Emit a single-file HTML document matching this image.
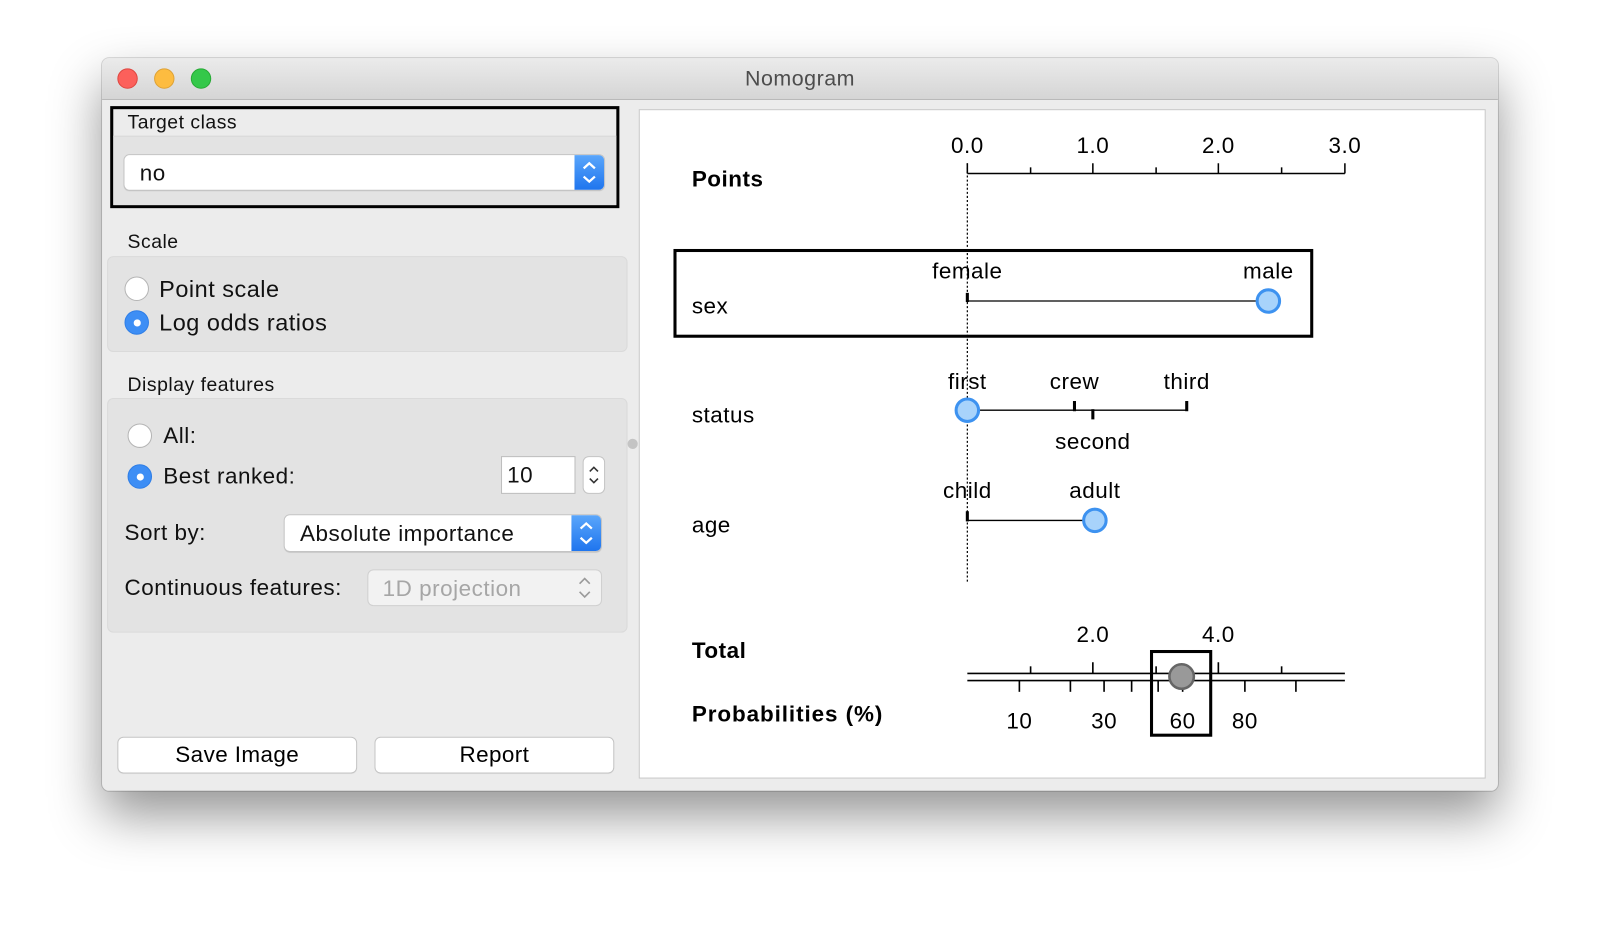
<!DOCTYPE html>
<html><head><style>
html,body{margin:0;padding:0;width:1600px;height:937px;overflow:hidden;background:#fff;font-family:"Liberation Sans",Helvetica,Arial,sans-serif;}
#s{position:absolute;left:0;top:0;width:1568px;height:918px;transform:scale(1.0204);transform-origin:0 0;}
.a{position:absolute;}
.win{left:100px;top:57px;width:1368px;height:718px;border-radius:7px;background:#ececec;box-shadow:0 24px 50px rgba(0,0,0,0.42),0 0 0 1px rgba(0,0,0,0.15);overflow:hidden;}
.tb{left:0;top:0;width:1368px;height:40px;background:linear-gradient(#ebebeb,#d5d5d5);border-bottom:1px solid #b9b9b9;}
.dot{width:20px;height:20px;border-radius:50%;top:10px;}
.t{font-size:21px;color:#111;white-space:nowrap;letter-spacing:0.5px;}
.grp{background:#e3e3e3;border:1px solid #dadada;border-radius:6px;}
.radio{width:24px;height:24px;border-radius:50%;background:#fff;border:1px solid #b5b5b5;box-sizing:border-box;}
.radio.on{background:#3d8ef5;border-color:#2f7ee6;}
.radio.on:after{content:"";position:absolute;left:8px;top:8px;width:7px;height:7px;border-radius:50%;background:#fff;}
.combo{background:#fff;border-radius:5px;box-shadow:0 0 0 1px #c4c4c4,0 1px 1px rgba(0,0,0,0.2);}
.cbtn{position:absolute;right:0;top:0;bottom:0;width:29px;background:linear-gradient(#5aa6fb,#1f75ee);border-radius:0 5px 5px 0;}
.btn{background:#fff;border-radius:5px;box-shadow:0 0 0 1px #c4c4c4,0 1px 1px rgba(0,0,0,0.2);text-align:center;font-size:22px;line-height:34px;height:34px;letter-spacing:0.4px;}
svg text{letter-spacing:0.5px;}
</style></head><body><div id="s">
<div class="a win">
 <div class="a tb">
  <div class="a dot" style="left:15px;background:#fc605b;border:1px solid #de4741;box-sizing:border-box"></div>
  <div class="a dot" style="left:51px;background:#fdbc40;border:1px solid #dea236;box-sizing:border-box"></div>
  <div class="a dot" style="left:87px;background:#34c84a;border:1px solid #27aa35;box-sizing:border-box"></div>
  <div class="a" style="left:0;width:1368px;top:9px;text-align:center;font-size:21px;color:#4d4d4d;letter-spacing:0.5px">Nomogram</div>
 </div>
</div>
<div class="a" style="left:108px;top:104px;width:499px;height:100px;border:3px solid #000;box-sizing:border-box;background:#ececec">
 <div class="a" style="left:0;top:26px;right:0;bottom:0;background:#e3e3e3;border-top:1px solid #d8d8d8"></div>
 <div class="a t" style="left:14px;top:3px;font-size:19px">Target class</div>
 <div class="a combo" style="left:11px;top:45px;width:470px;height:34px">
  <div class="a t" style="left:15px;top:5px;font-size:22px">no</div>
  <div class="cbtn"><svg width="29" height="34"><path d="M9 13l5.5-5 5.5 5M9 21l5.5 5 5.5-5" fill="none" stroke="#fff" stroke-width="2.2"/></svg></div>
 </div>
</div>
<div class="a t" style="left:125px;top:227px;font-size:19px">Scale</div>
<div class="a grp" style="left:105px;top:251px;width:508px;height:92px"></div>
<div class="a radio" style="left:122px;top:271px"></div>
<div class="a t" style="left:156px;top:270px;font-size:23px">Point scale</div>
<div class="a radio on" style="left:122px;top:304px"></div>
<div class="a t" style="left:156px;top:303px;font-size:23px">Log odds ratios</div>
<div class="a t" style="left:125px;top:367px;font-size:19px">Display features</div>
<div class="a grp" style="left:105px;top:390px;width:508px;height:228px"></div>
<div class="a radio" style="left:125px;top:415px"></div>
<div class="a t" style="left:160px;top:414px;font-size:22px">All:</div>
<div class="a radio on" style="left:125px;top:455px"></div>
<div class="a t" style="left:160px;top:454px;font-size:22px">Best ranked:</div>
<div class="a" style="left:492px;top:448px;width:71px;height:35px;background:#fff;box-shadow:0 0 0 1px #bdbdbd"><div class="a t" style="left:5px;top:5px;font-size:22px">10</div></div>
<div class="a" style="left:572px;top:448px;width:20px;height:35px;background:#fff;border-radius:5px;box-shadow:0 0 0 1px #c4c4c4"><svg width="20" height="35"><path d="M6 14l4-4 4 4M6 21l4 4 4-4" fill="none" stroke="#333" stroke-width="1.6"/></svg></div>
<div class="a t" style="left:122px;top:509px;font-size:22px">Sort by:</div>
<div class="a combo" style="left:279px;top:505px;width:310px;height:35px">
 <div class="a t" style="left:15px;top:5px;font-size:22px">Absolute importance</div>
 <div class="cbtn"><svg width="29" height="35"><path d="M9 13l5.5-5 5.5 5M9 22l5.5 5 5.5-5" fill="none" stroke="#fff" stroke-width="2.2"/></svg></div>
</div>
<div class="a t" style="left:122px;top:563px;font-size:22px">Continuous features:</div>
<div class="a" style="left:361px;top:559px;width:228px;height:34px;background:#f2f2f2;border-radius:5px;box-shadow:0 0 0 1px #d0d0d0">
 <div class="a t" style="left:14px;top:5px;font-size:22px;color:#a6a6a6">1D projection</div>
 <svg class="a" style="right:6px;top:0" width="20" height="34"><path d="M5 13l5-5 5 5M5 21l5 5 5-5" fill="none" stroke="#9a9a9a" stroke-width="1.6"/></svg>
</div>
<div class="a btn" style="left:116px;top:723px;width:233px">Save Image</div>
<div class="a btn" style="left:368px;top:723px;width:233px">Report</div>
<div class="a" style="left:615px;top:430px;width:10px;height:10px;border-radius:50%;background:#c4c4c4"></div>
<div class="a" style="left:627px;top:108px;width:828px;height:654px;background:#fff;box-shadow:0 0 0 1px #c9c9c9"></div>
<svg class="a" style="left:0;top:0" width="1568" height="918" font-family="Liberation Sans, Arial, sans-serif" font-size="22" fill="#000">
 <g text-anchor="middle">
  <text x="948" y="150">0.0</text><text x="1071" y="150">1.0</text><text x="1194" y="150">2.0</text><text x="1318" y="150">3.0</text>
 </g>
 <g stroke="#000" stroke-width="1.5">
  <line x1="948" y1="170" x2="1318" y2="170"/>
  <line x1="948" y1="160" x2="948" y2="170"/><line x1="1010" y1="164" x2="1010" y2="170"/><line x1="1071" y1="160" x2="1071" y2="170"/><line x1="1133" y1="164" x2="1133" y2="170"/><line x1="1194" y1="160" x2="1194" y2="170"/><line x1="1256" y1="164" x2="1256" y2="170"/><line x1="1318" y1="160" x2="1318" y2="170"/>
  <line x1="948" y1="160" x2="948" y2="572" stroke-dasharray="2,2" stroke-width="1.2"/>
 </g>
 <text x="678" y="183" font-weight="bold">Points</text>
 <rect x="661.5" y="245.5" width="624" height="84" fill="none" stroke="#000" stroke-width="3"/>
 <text x="678" y="307">sex</text>
 <text x="948" y="273" text-anchor="middle">female</text><text x="1243" y="273" text-anchor="middle">male</text>
 <line x1="948" y1="295" x2="1243" y2="295" stroke="#000" stroke-width="1.3"/>
 <line x1="948" y1="287" x2="948" y2="296" stroke="#000" stroke-width="3"/>
 <circle cx="1243" cy="295" r="11" fill="#a8d3fb" stroke="#3d92f0" stroke-width="3"/>
 <text x="678" y="414">status</text>
 <g text-anchor="middle"><text x="948" y="381">first</text><text x="1053" y="381">crew</text><text x="1163" y="381">third</text><text x="1071" y="440">second</text></g>
 <line x1="948" y1="402" x2="1163" y2="402" stroke="#000" stroke-width="1.3"/>
 <g stroke="#000" stroke-width="3"><line x1="1053" y1="393" x2="1053" y2="403"/><line x1="1163" y1="393" x2="1163" y2="403"/><line x1="1071" y1="401" x2="1071" y2="411"/></g>
 <circle cx="948" cy="402" r="11" fill="#a8d3fb" stroke="#3d92f0" stroke-width="3"/>
 <text x="678" y="522">age</text>
 <text x="948" y="488" text-anchor="middle">child</text><text x="1073" y="488" text-anchor="middle">adult</text>
 <line x1="948" y1="510" x2="1073" y2="510" stroke="#000" stroke-width="1.3"/>
 <line x1="948" y1="501" x2="948" y2="511" stroke="#000" stroke-width="3"/>
 <circle cx="1073" cy="510" r="11" fill="#a8d3fb" stroke="#3d92f0" stroke-width="3"/>
 <text x="678" y="645" font-weight="bold">Total</text>
 <text x="678" y="707" font-weight="bold" style="letter-spacing:0.9px">Probabilities (%)</text>
 <g text-anchor="middle"><text x="1071" y="629">2.0</text><text x="1194" y="629">4.0</text>
 <text x="999" y="714">10</text><text x="1082" y="714">30</text><text x="1159" y="714">60</text><text x="1220" y="714">80</text></g>
 <g stroke="#000" stroke-width="1.6">
  <line x1="948" y1="660" x2="1318" y2="660"/><line x1="948" y1="667" x2="1318" y2="667"/>
  <line x1="1010" y1="653" x2="1010" y2="660"/><line x1="1071" y1="649" x2="1071" y2="660"/><line x1="1133" y1="653" x2="1133" y2="660"/><line x1="1194" y1="649" x2="1194" y2="660"/><line x1="1256" y1="653" x2="1256" y2="660"/>
  <line x1="999" y1="667" x2="999" y2="678"/><line x1="1049" y1="667" x2="1049" y2="678"/><line x1="1082" y1="667" x2="1082" y2="678"/><line x1="1109" y1="667" x2="1109" y2="678"/><line x1="1135" y1="667" x2="1135" y2="678"/><line x1="1159" y1="667" x2="1159" y2="678"/><line x1="1220" y1="667" x2="1220" y2="678"/><line x1="1270" y1="667" x2="1270" y2="678"/>
 </g>
 <circle cx="1158" cy="663" r="12" fill="#999" stroke="#666" stroke-width="2.5"/>
 <rect x="1128.5" y="638.5" width="58" height="82" fill="none" stroke="#000" stroke-width="3"/>
</svg>
</div></body></html>
